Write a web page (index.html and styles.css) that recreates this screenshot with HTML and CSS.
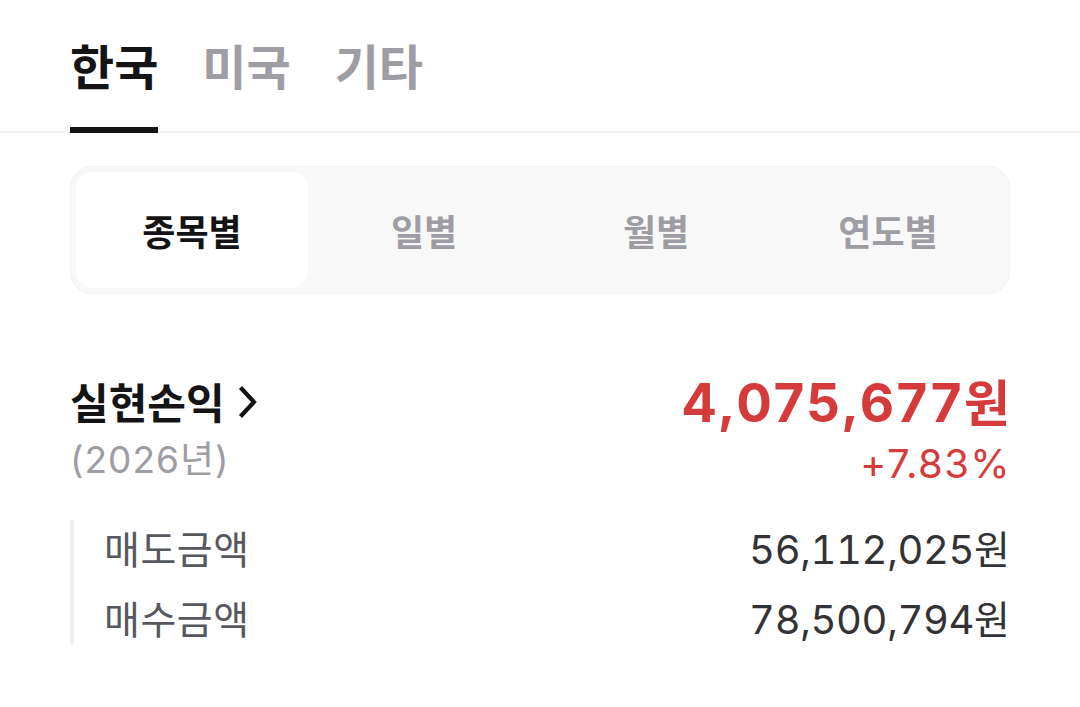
FILE: index.html
```html
<!DOCTYPE html>
<html lang="ko">
<head>
<meta charset="utf-8">
<title>실현손익</title>
<link rel="stylesheet" href="styles.css">
</head>
<body>
  <header class="market-tabs">
    <div class="market-tabs__inner">
      <a class="market-tab is-active">한국</a>
      <a class="market-tab">미국</a>
      <a class="market-tab">기타</a>
    </div>
  </header>

  <main class="content">
    <nav class="segment">
      <button class="segment__item is-active">종목별</button>
      <button class="segment__item">일별</button>
      <button class="segment__item">월별</button>
      <button class="segment__item">연도별</button>
    </nav>

    <section class="summary">
      <div class="summary__head">
        <div class="summary__title">
          <h2 class="summary__label">실현손익
            <svg class="chevron" viewBox="0 0 20 34" width="20" height="34" aria-hidden="true">
              <path d="M2.5 2.5 L16 17 L2.5 31.5" fill="none" stroke="#141416" stroke-width="4.2" stroke-linejoin="miter"/>
            </svg>
          </h2>
          <p class="summary__year">(2026년)</p>
        </div>
        <div class="summary__amount">
          <p class="summary__value"><span class="num">4,075,677</span><span class="unit">원</span></p>
          <p class="summary__rate">+7.83%</p>
        </div>
      </div>

      <dl class="breakdown">
        <div class="breakdown__row">
          <dt>매도금액</dt>
          <dd><span class="num">56,112,025</span><span class="unit">원</span></dd>
        </div>
        <div class="breakdown__row">
          <dt>매수금액</dt>
          <dd><span class="num">78,500,794</span><span class="unit">원</span></dd>
        </div>
      </dl>
    </section>
  </main>
</body>
</html>
```

FILE: styles.css
```css
* {
  box-sizing: border-box;
}

body {
  margin: 0;
  background: #ffffff;
  font-family: "Noto Sans CJK KR", sans-serif;
  color: #111113;
}

p, h2, dl, dd, dt {
  margin: 0;
}

.num {
  font-family: Inter, "Noto Sans CJK KR", sans-serif;
}

/* market tabs */
.market-tabs {
  border-bottom: 2px solid #f1f1f3;
}

.market-tabs__inner {
  display: flex;
  gap: 44px;
  padding: 0 70px;
}

.market-tab {
  display: flex;
  align-items: center;
  height: 133px;
  margin-bottom: -2px;
  font-size: 48px;
  font-weight: 700;
  color: #9d9da3;
  border-bottom: 6px solid transparent;
}

.market-tab.is-active {
  color: #141416;
  border-bottom-color: #141416;
}

.content {
  padding: 33px 70px 0;
}

/* period segment */
.segment {
  display: grid;
  grid-template-columns: repeat(4, 1fr);
  height: 128px;
  padding: 5px;
  background: #f8f8f9;
  border: 1px solid #f2f2f4;
  border-radius: 22px;
}

.segment__item {
  border: 0;
  background: transparent;
  font-family: "Noto Sans CJK KR", sans-serif;
  font-size: 36px;
  font-weight: 700;
  color: #9d9da3;
  border-radius: 17px;
  padding: 0;
}

.segment__item.is-active {
  background: #ffffff;
  color: #141416;
}

/* realized profit summary */
.summary {
  padding-top: 76px;
}

.summary__head {
  display: flex;
  justify-content: space-between;
  align-items: flex-start;
}

.summary__label {
  display: flex;
  align-items: center;
  gap: 13px;
  height: 60px;
  font-size: 42px;
  font-weight: 700;
  color: #141416;
}

.chevron {
  margin-top: 4px;
}

.summary__year {
  font-family: Inter, "Noto Sans CJK KR", sans-serif;
  font-size: 37px;
  letter-spacing: 1px;
  height: 54px;
  line-height: 54px;
  margin-top: 3px;
  color: #9d9da3;
}

.summary__amount {
  text-align: right;
}

.summary__value {
  height: 60px;
  color: #d63b3b;
  font-weight: 700;
  line-height: 60px;
}

.summary__value .num {
  font-size: 53px;
  letter-spacing: 2.4px;
}

.summary__value .unit {
  font-size: 50px;
}

.summary__rate {
  font-family: Inter, "Noto Sans CJK KR", sans-serif;
  color: #d63b3b;
  font-size: 40px;
  letter-spacing: 1.4px;
  margin-right: -1px;
  height: 68px;
  line-height: 68px;
}

/* sell / buy breakdown */
.breakdown {
  margin-top: 22px;
  border-left: 4px solid #eeeef1;
  display: flex;
  flex-direction: column;
  gap: 16px;
}

.breakdown__row {
  display: flex;
  justify-content: space-between;
  align-items: center;
  height: 54px;
  padding-left: 30px;
}

.breakdown dt {
  font-size: 39px;
  letter-spacing: 0.5px;
  color: #57575e;
}

.breakdown dd {
  color: #333336;
}

.breakdown dd .num {
  font-size: 40px;
  letter-spacing: -0.4px;
  font-variant-numeric: tabular-nums;
}

.breakdown dd .unit {
  font-size: 39px;
}
```
